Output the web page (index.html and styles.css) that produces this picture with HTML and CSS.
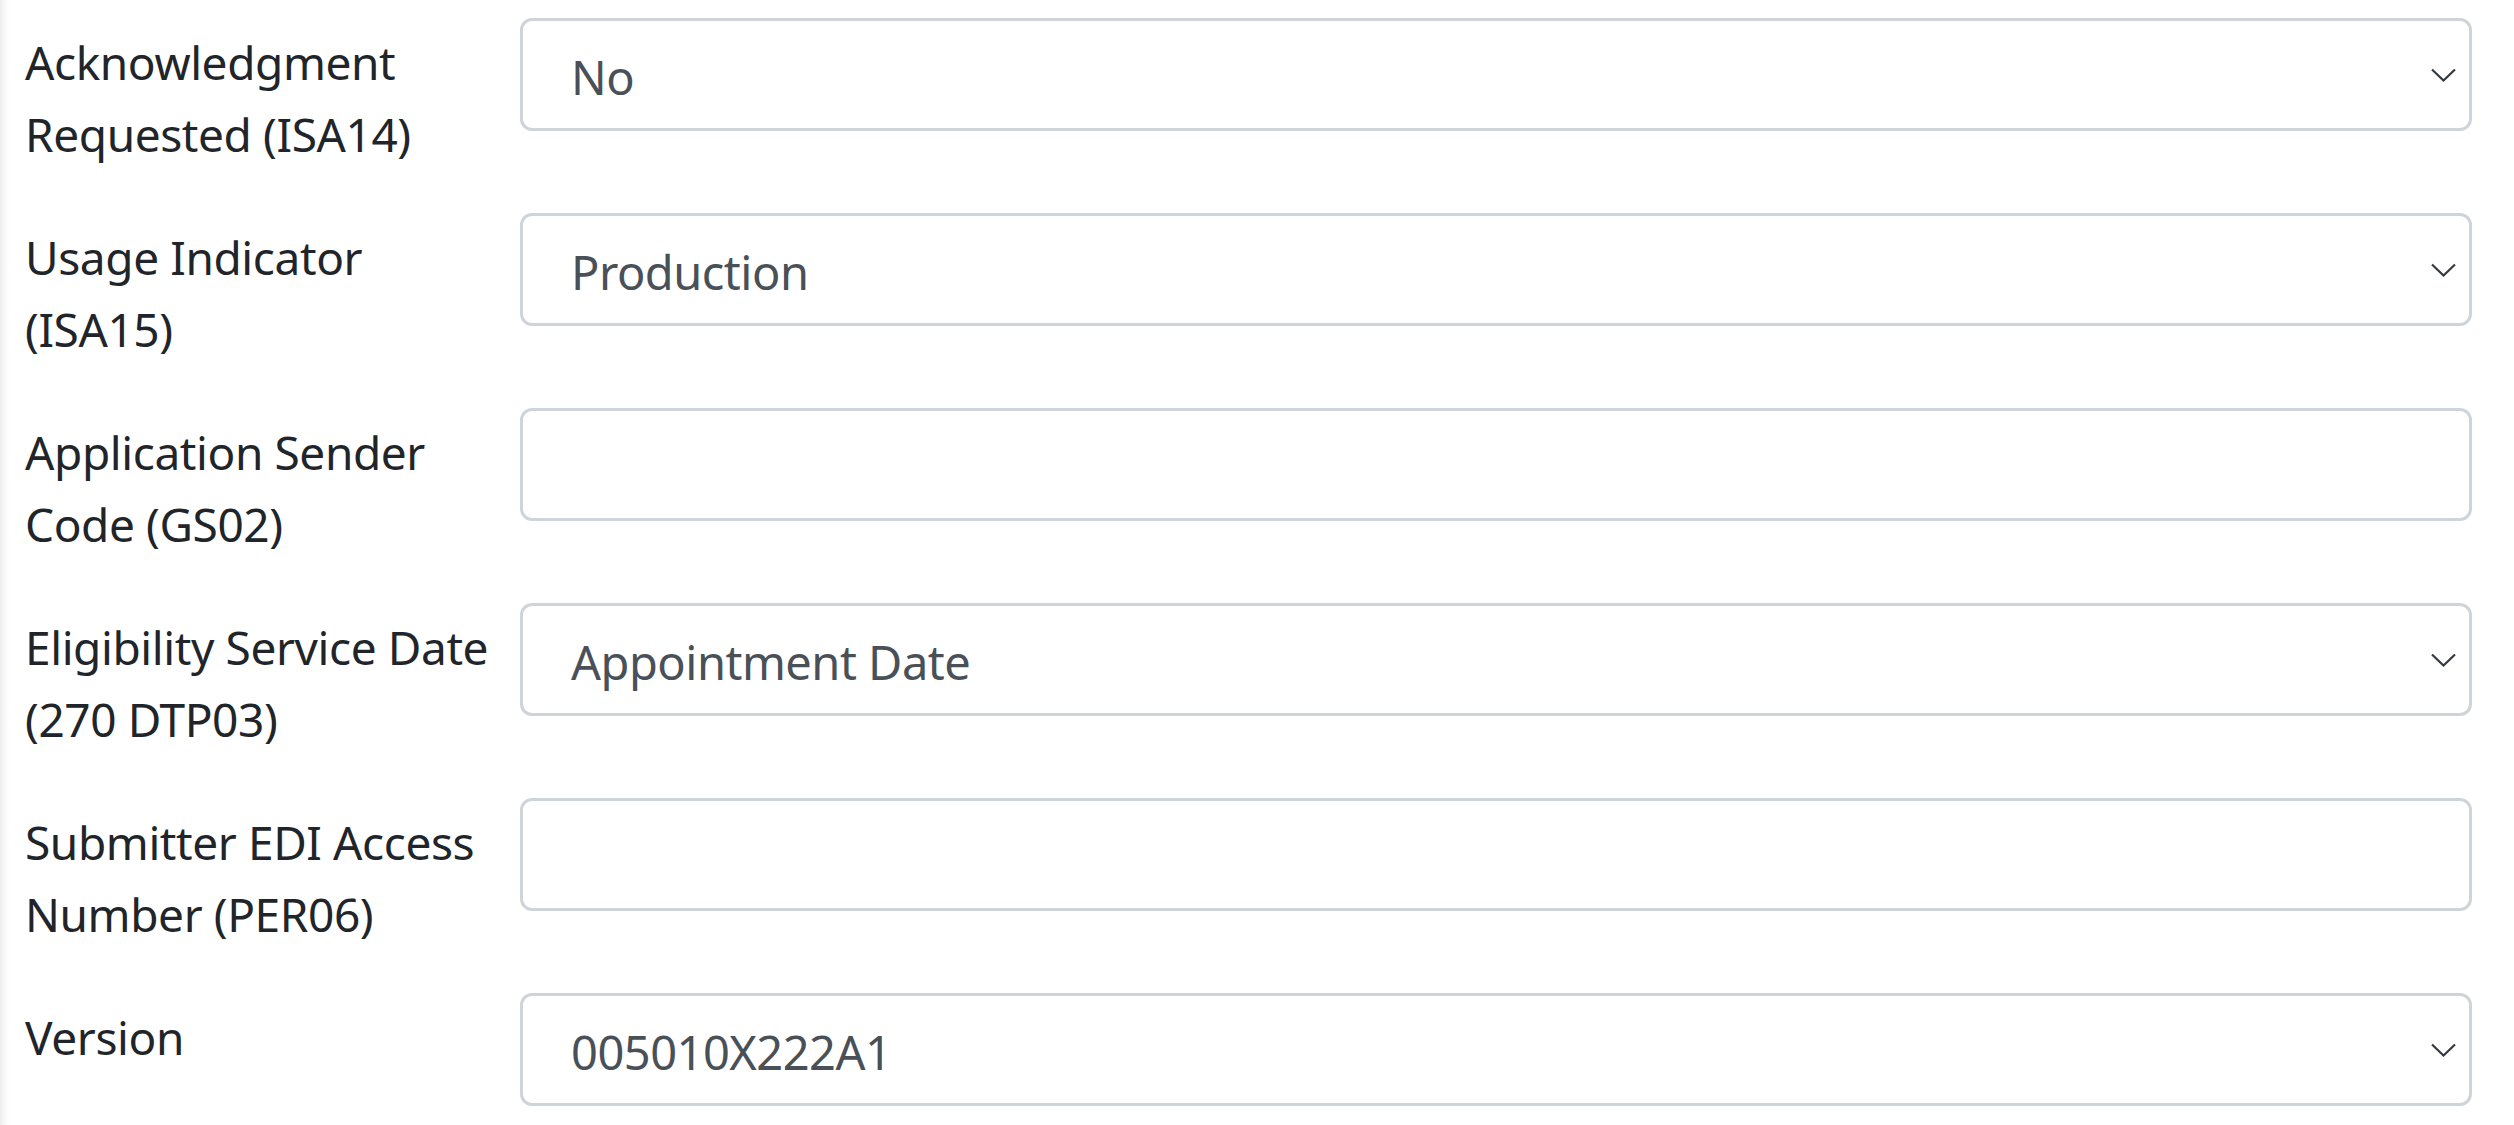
FILE: index.html
```html
<!DOCTYPE html>
<html lang="en">
<head>
<meta charset="utf-8">
<title>EDI Settings</title>
<link rel="stylesheet" href="styles.css">
</head>
<body>
<div class="page">
  <form class="form">
    <div class="row">
      <label class="label">Acknowledgment Requested (ISA14)</label>
      <div class="control select">
        <span class="value">No</span>
        <svg class="chev" width="25" height="14" viewBox="0 0 25 14"><polyline points="1,1.5 12.5,12.5 24,1.5" fill="none" stroke="#343a40" stroke-width="2.2"/></svg>
      </div>
    </div>
    <div class="row">
      <label class="label">Usage Indicator (ISA15)</label>
      <div class="control select">
        <span class="value">Production</span>
        <svg class="chev" width="25" height="14" viewBox="0 0 25 14"><polyline points="1,1.5 12.5,12.5 24,1.5" fill="none" stroke="#343a40" stroke-width="2.2"/></svg>
      </div>
    </div>
    <div class="row">
      <label class="label">Application Sender Code (GS02)</label>
      <div class="control input"></div>
    </div>
    <div class="row">
      <label class="label">Eligibility Service Date (270 DTP03)</label>
      <div class="control select">
        <span class="value">Appointment Date</span>
        <svg class="chev" width="25" height="14" viewBox="0 0 25 14"><polyline points="1,1.5 12.5,12.5 24,1.5" fill="none" stroke="#343a40" stroke-width="2.2"/></svg>
      </div>
    </div>
    <div class="row">
      <label class="label">Submitter EDI Access Number (PER06)</label>
      <div class="control input"></div>
    </div>
    <div class="row">
      <label class="label">Version</label>
      <div class="control select">
        <span class="value">005010X222A1</span>
        <svg class="chev" width="25" height="14" viewBox="0 0 25 14"><polyline points="1,1.5 12.5,12.5 24,1.5" fill="none" stroke="#343a40" stroke-width="2.2"/></svg>
      </div>
    </div>
  </form>
</div>
</body>
</html>
```

FILE: styles.css
```css
html, body {
  margin: 0;
  padding: 0;
  background: #ffffff;
}

body {
  font-family: "Noto Sans", "Open Sans", sans-serif;
  color: #212529;
}

.page {
  min-height: 1125px;
  box-sizing: border-box;
  padding: 18px 42px 0 25px;
  background: linear-gradient(to right, #ededed 0px, #f7f7f7 4px, #ffffff 9px);
}

.form {
  display: flex;
  flex-direction: column;
  gap: 43px;
}

.row {
  display: grid;
  grid-template-columns: 495px 1fr;
  align-items: start;
}

.label {
  font-size: 46px;
  line-height: 72px;
  padding-top: 8px;
  padding-right: 28px;
  letter-spacing: -0.4px;
}

.control {
  height: 113px;
  box-sizing: border-box;
  border: 3px solid #ced4da;
  border-radius: 12px;
  background: #ffffff;
  display: flex;
  align-items: center;
  justify-content: space-between;
  padding: 4px 13px 0 48px;
}

.value {
  font-size: 47px;
  color: #495057;
  letter-spacing: -0.5px;
}

.chev {
  display: block;
  margin-top: -4px;
}
```
